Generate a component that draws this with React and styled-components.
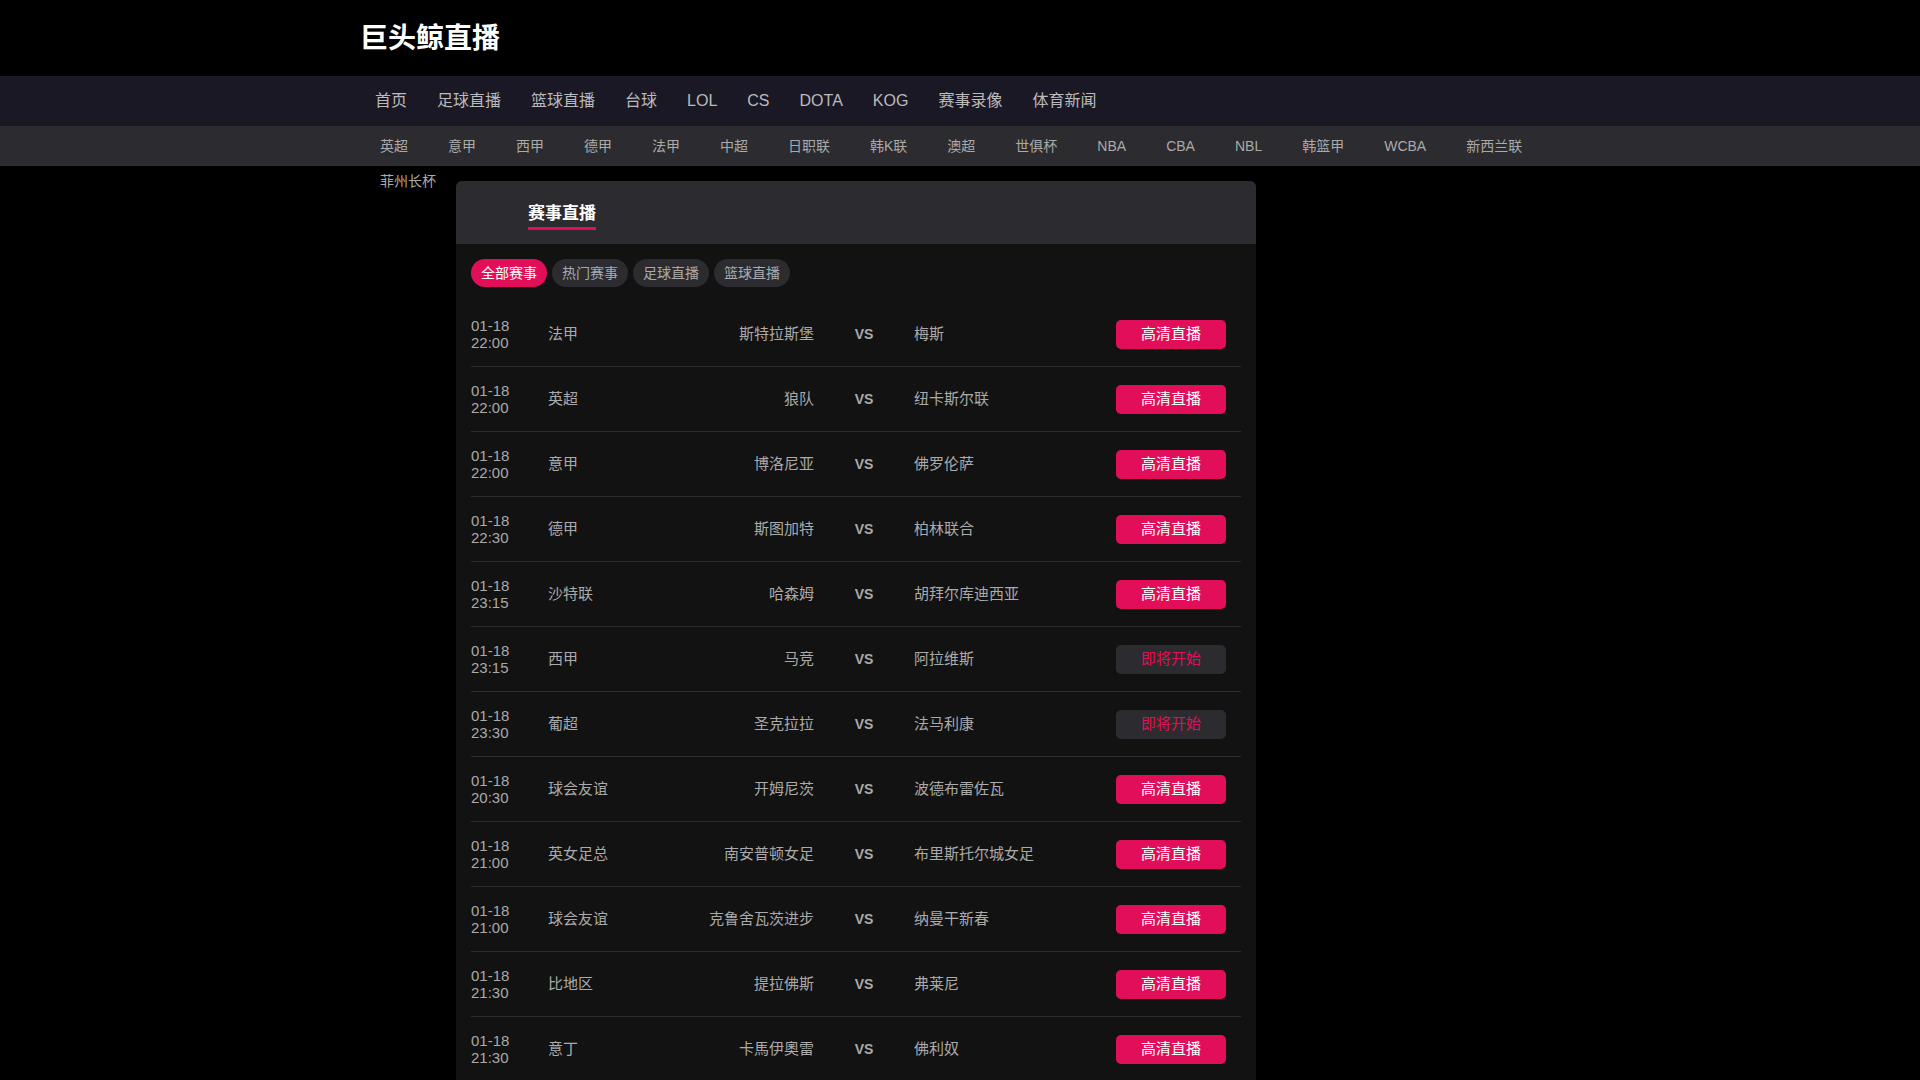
import React from "react";
import styled, { createGlobalStyle } from "styled-components";

const GlobalStyle = createGlobalStyle`
  html, body {
    margin: 0;
    padding: 0;
    height: 100%;
    overflow: hidden;
    background: #000;
    font-family: "Liberation Sans", "Noto Sans CJK SC", sans-serif;
  }
`;

const Wrap = styled.div`
  width: 1200px;
  margin: 0 auto;
`;

const Header = styled.header`
  height: 76px;
  background: #000;
`;

const Logo = styled.h1`
  margin: 0;
  font-size: 28px;
  line-height: 78px;
  font-weight: 700;
  color: #fff;
`;

const NavBar = styled.nav`
  height: 50px;
  background: #1a1824;
`;

const NavList = styled(Wrap)`
  display: flex;
`;

const NavLink = styled.a`
  padding: 0 15px;
  font-size: 16px;
  line-height: 50px;
  color: #bbb;
`;

const SubBar = styled.div`
  height: 40px;
  background: #2c2b2f;
`;

const SubList = styled(Wrap)`
  display: flex;
`;

const SubLink = styled.a`
  padding: 0 20px;
  font-size: 14px;
  line-height: 40px;
  color: #aaa;
`;

const Main = styled(Wrap)`
  display: flex;
  align-items: flex-start;
`;

const SideLink = styled(SubLink)`
  width: 56px;
  flex: none;
  line-height: 30px;
`;

const Card = styled.section`
  width: 800px;
  margin-top: 15px;
  background: #121212;
  border-radius: 6px 6px 0 0;
`;

const CardHead = styled.div`
  height: 63px;
  padding-left: 72px;
  background: #2c2b2f;
  border-radius: 6px 6px 0 0;
  box-sizing: border-box;
  padding-top: 19px;
`;

const CardTitle = styled.h2`
  display: inline-block;
  margin: 0;
  font-size: 17px;
  line-height: 27px;
  font-weight: 700;
  color: #fff;
  border-bottom: 3px solid #e30e5a;
`;

const CardBody = styled.div`
  padding: 15px 15px 0;
`;

const Tabs = styled.div`
  display: flex;
  gap: 5px;
  margin-bottom: 15px;
`;

const Tab = styled.a`
  padding: 0 10px;
  font-size: 14px;
  line-height: 28px;
  border-radius: 14px;
  color: ${(p) => (p.$active ? "#fff" : "#aaa")};
  background: ${(p) => (p.$active ? "#e30e5a" : "#2c2b2f")};
`;

const Row = styled.div`
  display: grid;
  grid-template-columns: 77px 100px 166px 100px 1fr auto;
  align-items: center;
  height: 65px;
  padding-right: 15px;
  box-sizing: border-box;
  border-bottom: 1px solid #2c2b2f;
  font-size: 15px;
  line-height: 20px;
  color: #aaa;
`;

const Time = styled.div`
  line-height: 17px;
`;

const Home = styled.div`
  text-align: right;
`;

const Vs = styled.div`
  text-align: center;
  font-size: 14px;
  font-weight: 700;
`;

const Watch = styled.a`
  width: 110px;
  height: 29px;
  line-height: 28px;
  text-align: center;
  border-radius: 5px;
  color: ${(p) => (p.$pending ? "#e30e5a" : "#fff")};
  background: ${(p) => (p.$pending ? "#2c2b2f" : "#e30e5a")};
`;

const navItems = ["首页", "足球直播", "篮球直播", "台球", "LOL", "CS", "DOTA", "KOG", "赛事录像", "体育新闻"];

const subItems = ["英超", "意甲", "西甲", "德甲", "法甲", "中超", "日职联", "韩K联", "澳超", "世俱杯", "NBA", "CBA", "NBL", "韩篮甲", "WCBA", "新西兰联"];

const tabs = ["全部赛事", "热门赛事", "足球直播", "篮球直播"];

const matches = [
  { date: "01-18", time: "22:00", league: "法甲", home: "斯特拉斯堡", away: "梅斯" },
  { date: "01-18", time: "22:00", league: "英超", home: "狼队", away: "纽卡斯尔联" },
  { date: "01-18", time: "22:00", league: "意甲", home: "博洛尼亚", away: "佛罗伦萨" },
  { date: "01-18", time: "22:30", league: "德甲", home: "斯图加特", away: "柏林联合" },
  { date: "01-18", time: "23:15", league: "沙特联", home: "哈森姆", away: "胡拜尔库迪西亚" },
  { date: "01-18", time: "23:15", league: "西甲", home: "马竞", away: "阿拉维斯", pending: true },
  { date: "01-18", time: "23:30", league: "葡超", home: "圣克拉拉", away: "法马利康", pending: true },
  { date: "01-18", time: "20:30", league: "球会友谊", home: "开姆尼茨", away: "波德布雷佐瓦" },
  { date: "01-18", time: "21:00", league: "英女足总", home: "南安普顿女足", away: "布里斯托尔城女足" },
  { date: "01-18", time: "21:00", league: "球会友谊", home: "克鲁舍瓦茨进步", away: "纳曼干新春" },
  { date: "01-18", time: "21:30", league: "比地区", home: "提拉佛斯", away: "弗莱尼" },
  { date: "01-18", time: "21:30", league: "意丁", home: "卡馬伊奧雷", away: "佛利奴" },
];

export default function App() {
  return (
    <>
      <GlobalStyle />
      <Header>
        <Wrap>
          <Logo>巨头鲸直播</Logo>
        </Wrap>
      </Header>
      <NavBar>
        <NavList>
          {navItems.map((n) => (
            <NavLink key={n}>{n}</NavLink>
          ))}
        </NavList>
      </NavBar>
      <SubBar>
        <SubList>
          {subItems.map((s) => (
            <SubLink key={s}>{s}</SubLink>
          ))}
        </SubList>
      </SubBar>
      <Main>
        <SideLink>菲州长杯</SideLink>
        <Card>
          <CardHead>
            <CardTitle>赛事直播</CardTitle>
          </CardHead>
          <CardBody>
            <Tabs>
              {tabs.map((t, i) => (
                <Tab key={t} $active={i === 0}>
                  {t}
                </Tab>
              ))}
            </Tabs>
            {matches.map((m, i) => (
              <Row key={i}>
                <Time>
                  {m.date}
                  <br />
                  {m.time}
                </Time>
                <div>{m.league}</div>
                <Home>{m.home}</Home>
                <Vs>VS</Vs>
                <div>{m.away}</div>
                <Watch $pending={m.pending}>{m.pending ? "即将开始" : "高清直播"}</Watch>
              </Row>
            ))}
          </CardBody>
        </Card>
      </Main>
    </>
  );
}
